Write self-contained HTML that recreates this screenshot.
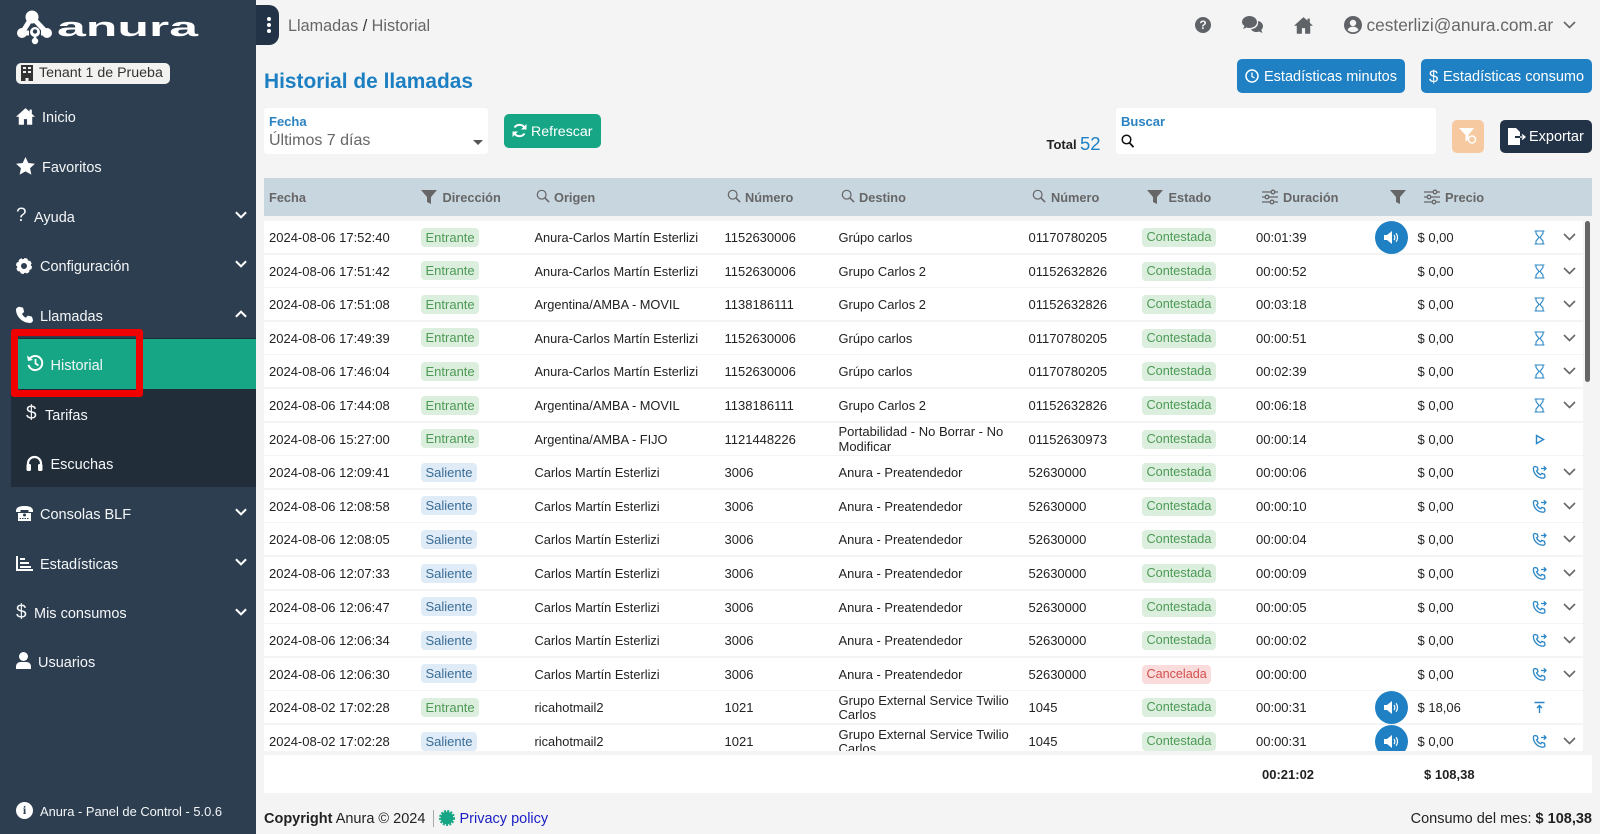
<!DOCTYPE html>
<html lang="es"><head><meta charset="utf-8"><title>Historial de llamadas</title>
<style>
*{box-sizing:border-box}
html,body{margin:0;padding:0;width:1600px;height:834px;overflow:hidden;background:#f4f4f4;font-family:"Liberation Sans",Arial,sans-serif;color:#222}
.a{position:absolute;white-space:nowrap}
#side{position:absolute;left:0;top:0;width:256px;height:834px;background:#2d3e50;color:#fff}
.mi{position:absolute;margin-top:1px;font-size:14.5px;line-height:20px;height:20px;color:#f4f6f8;white-space:nowrap}
.si{position:absolute;fill:#fff}
.ch{position:absolute;left:235px;width:12px;height:8px;fill:none;stroke:#fff;stroke-width:2.2}
.btn{position:absolute;border-radius:5px;color:#fff;font-size:14.5px;white-space:nowrap}
.card{position:absolute;background:#fff;border-radius:3px}
.lab{position:absolute;left:5px;top:6px;font-size:13px;font-weight:bold;color:#2a82c0;line-height:15px}
#band{position:absolute;left:264px;top:178px;width:1328px;height:38px;background:#c8d6e0}
.h{position:absolute;top:0;line-height:40px;height:38px;font-size:12.8px;font-weight:bold;color:#666;white-space:nowrap}
.hi{position:absolute;fill:#666}
#clip{position:absolute;left:264px;top:220px;width:1319px;height:531px;overflow:hidden}
.r{position:absolute;left:0;width:1319px;height:32px;background:#fff;font-size:13px;line-height:33px;color:#222}
.r>span,.r>div{position:absolute;white-space:nowrap}
.f{left:5px}.o{left:270.5px;font-size:12.8px}.n{left:460.5px}.d{left:574.5px;font-size:12.9px}.m{left:764.5px}.t{left:992px}.p{left:1153.5px}
.d2{left:574.5px;top:2.5px;line-height:14.5px}
.pill{top:6.5px;height:19px;line-height:19px;padding:0 4.5px;border-radius:4px}
.en{left:157px;background:#dceede;color:#4d9a55}
.sa{left:157px;background:#dfecf7;color:#3a6c96}
.r>.co{left:878px;top:7px;background:#dceede;color:#4d9a55;font-size:12.7px}
.r>.ca{left:878px;top:7px;background:#fadcdc;color:#d2504c;font-size:12.6px}
svg.ac{position:absolute;left:1268px;top:9px;width:15px;height:15px;fill:none;stroke:#2a86c6;stroke-width:1.6}
svg.hgi{stroke-width:1.1}
svg.cv{position:absolute;left:1299px;top:12px;width:13px;height:8px;fill:none;stroke:#666;stroke-width:1.6}
.au{position:absolute;left:1110.5px;top:-0.5px;width:33px;height:33px;border-radius:50%;background:#1f80c4}
.au svg{position:absolute;left:8px;top:8px;width:17px;height:17px;fill:#fff}
#sb{position:absolute;left:1585px;top:221px;width:5px;height:161px;border-radius:3px;background:#666}
#tot{position:absolute;left:264px;top:755px;width:1328px;height:38px;background:#fff;font-size:13px;font-weight:bold;line-height:39px;color:#222}
</style></head><body>
<svg width="0" height="0" style="position:absolute">
<defs>
<symbol id="funnel" viewBox="0 0 16 16"><path d="M0 1h16L10 8v7l-4-2V8z"/></symbol>
<symbol id="mag" viewBox="0 0 16 16"><circle cx="6.5" cy="6.5" r="5" fill="none" stroke="#666" stroke-width="1.4"/><path d="M10.2 10.2L15 15" stroke="#666" stroke-width="1.8" fill="none"/></symbol>
<symbol id="slid" viewBox="0 0 16 16"><g fill="none" stroke="#666" stroke-width="1.3"><path d="M0 3h9M13 3h3M0 8h3M7 8h9M0 13h8M12 13h4"/><circle cx="11" cy="3" r="1.8"/><circle cx="5" cy="8" r="1.8"/><circle cx="10" cy="13" r="1.8"/></g></symbol>
<symbol id="cvd" viewBox="0 0 13 8"><path d="M1 1l5.5 5.5L12 1"/></symbol>
<symbol id="hg" viewBox="0 0 15 15"><path d="M2.5 1h10M2.5 14h10M4 1v2.500L7 7.500 4 11v3M11 1v2.500L8 7.500l3 3.500v3"/></symbol>
<symbol id="ph" viewBox="0 0 15 15"><path d="M3 1.500l2.200.6.8 2.600-1.400 1.100c.8 1.800 2.200 3.200 4 4l1.100-1.400 2.700.9.6 2.300c0 1-1 1.600-1.800 1.600C5.400 13.200 1.400 8.600 1.400 3.300 1.400 2.400 2 1.500 3 1.500z" stroke-width="1.300"/><path d="M9 3.500h5M11.800 1.300l2.200 2.200-2.200 2.200" stroke-width="1.300"/></symbol>
<symbol id="spk" viewBox="0 0 17 17"><path d="M1 6h3l5-4v13l-5-4H1z"/><path d="M11 6c1 1.500 1 3.500 0 5M13 4.200c2 2.500 2 6.100 0 8.600" fill="none" stroke="#fff" stroke-width="1.200"/></symbol>
</defs>
</svg>

<div id="side">
<svg class="a" style="left:16px;top:8px" width="190" height="40" viewBox="0 0 190 40">
<path d="M16 9L6 25M16 9L31 25" stroke="#fff" stroke-width="5" fill="none"/>
<path d="M6 25H13M25 25H31" stroke="#fff" stroke-width="5" fill="none"/>
<g fill="#fff"><circle cx="16" cy="9" r="6.500"/><circle cx="6" cy="25" r="5"/><circle cx="31" cy="25" r="5"/><circle cx="19" cy="24" r="5"/><circle cx="19" cy="33" r="3.200"/></g>
<circle cx="19" cy="23.500" r="2.200" fill="#2d3e50"/><path d="M19 26v6" stroke="#fff" stroke-width="2.500"/>
<text x="41" y="28" font-family="Liberation Sans" font-weight="bold" font-size="27" fill="#fff" textLength="141" lengthAdjust="spacingAndGlyphs">anura</text>
</svg>

<div class="a" style="left:16px;top:63px;width:154px;height:21px;background:#f2f2f0;border-radius:5px;color:#333;font-size:14.2px;line-height:21px;padding-left:23px">Tenant 1 de Prueba</div>
<svg class="a" style="left:21px;top:65px" width="12" height="16" viewBox="0 0 12 16"><path fill="#333" d="M0 0h12v16H7.500v-3h-3v3H0z"/><path fill="#f2f2f0" d="M2 2h3v2H2zM7 2h3v2H7zM2 6h3v2H2zM7 6h3v2H7z"/></svg>

<svg class="si" style="left:16px;top:107px" width="19" height="18" viewBox="0 0 24 22"><path d="M12 1L0 12h3.500v10H10v-7h4v7h6.500V12H24l-4-3.700V3h-3v2.500z"/></svg>
<div class="mi" style="left:42px;top:107px">Inicio</div>
<svg class="si" style="left:16px;top:157px" width="19" height="18" viewBox="0 0 24 23"><path d="M12 0l3.600 7.600 8.400 1-6.200 5.700 1.700 8.200L12 18.400l-7.500 4.100 1.700-8.200L0 8.600l8.400-1z"/></svg>
<div class="mi" style="left:42px;top:157px">Favoritos</div>
<div class="mi" style="left:16px;top:203px;font-size:19px;line-height:24px">?</div>
<div class="mi" style="left:34px;top:207px">Ayuda</div>
<svg class="ch" style="top:211px"><use href="#cvd"/></svg>
<svg class="a" style="left:16px;top:258px" width="16" height="16" viewBox="0 0 16 16"><circle cx="8" cy="8" r="5" fill="none" stroke="#fff" stroke-width="4"/><circle cx="8" cy="8" r="6.800" fill="none" stroke="#fff" stroke-width="2.400" stroke-dasharray="3.300 2.040"/></svg>
<div class="mi" style="left:40px;top:256px">Configuración</div>
<svg class="ch" style="top:260px"><use href="#cvd"/></svg>
<svg class="si" style="left:16px;top:306px" width="17" height="17" viewBox="0 0 24 24"><path d="M5 1l5 1.500 1.500 6-3 2.500c1 2.500 3 4.500 5.500 5.500l2.500-3 6 1.500L24 20c0 2-2 4-4 4C9 24 0 15 0 5c0-2 3-4 5-4z"/></svg>
<div class="mi" style="left:40px;top:306px">Llamadas</div>
<svg class="ch" style="top:310px;transform:scaleY(-1)"><use href="#cvd"/></svg>

<div class="a" style="left:11px;top:338px;width:245px;height:149px;background:#222d3a"></div>
<div class="a" style="left:18px;top:339px;width:238px;height:50px;background:#17a685"></div>
<div class="a" style="left:11px;top:329px;width:132px;height:68px;border:7px solid #f10000;border-radius:3px"></div>
<svg class="a" style="left:26px;top:354px" width="18" height="18" viewBox="0 0 18 18"><path d="M3.500 5A7 7 0 1 1 2.500 11" fill="none" stroke="#fff" stroke-width="2"/><path d="M1 1.500L2 7l5-1z" fill="#fff"/><path d="M9.500 5v4.500l3 2" fill="none" stroke="#fff" stroke-width="1.700"/></svg>
<div class="mi" style="left:50.500px;top:355px">Historial</div>
<div class="mi" style="left:26px;top:401px;font-size:19px;line-height:24px">$</div>
<div class="mi" style="left:45px;top:405px">Tarifas</div>
<svg class="a" style="left:26px;top:455px" width="17" height="16" viewBox="0 0 17 16"><path d="M2 12V8.500a6.500 6.500 0 0 1 13 0V12" fill="none" stroke="#fff" stroke-width="2.200"/><rect x="0.500" y="9" width="4.500" height="7" rx="1.500" fill="#fff"/><rect x="12" y="9" width="4.500" height="7" rx="1.500" fill="#fff"/></svg>
<div class="mi" style="left:50.500px;top:454px">Escuchas</div>

<svg class="a" style="left:16px;top:506px" width="17" height="15" viewBox="0 0 17 15"><path fill="#fff" d="M0 5C0 1 4 0 8.500 0S17 1 17 5v1h-4.500V4h-8v2H0z"/><path fill="#fff" d="M2 7h13v8H2z"/><circle cx="8.500" cy="9" r="1.500" fill="#2d3e50"/><path stroke="#2d3e50" d="M3.500 12.500h10" stroke-dasharray="1.500 1"/></svg>
<div class="mi" style="left:40px;top:504px">Consolas BLF</div>
<svg class="ch" style="top:508px"><use href="#cvd"/></svg>
<svg class="a" style="left:16px;top:556px" width="17" height="15" viewBox="0 0 17 15"><path fill="#fff" d="M0 0h2v13h15v2H0z"/><path fill="#fff" d="M4 2h5v2H4zM4 6h9v2H4zM4 10h11v2H4z"/></svg>
<div class="mi" style="left:40px;top:554px">Estadísticas</div>
<svg class="ch" style="top:558px"><use href="#cvd"/></svg>
<div class="mi" style="left:16px;top:600px;font-size:19px;line-height:24px">$</div>
<div class="mi" style="left:34px;top:603px">Mis consumos</div>
<svg class="ch" style="top:608px"><use href="#cvd"/></svg>
<svg class="si" style="left:16px;top:652px" width="15" height="17" viewBox="0 0 15 17"><circle cx="7.500" cy="4.500" r="4.500"/><path d="M0 17v-2.500C0 12 2 10 4.500 10h6c2.500 0 4.500 2 4.500 4.500V17z"/></svg>
<div class="mi" style="left:38px;top:652px">Usuarios</div>
<div class="a" style="left:16px;top:802px;width:17px;height:17px;border-radius:50%;background:#fff;color:#2d3e50;font:bold 12px/17px 'Liberation Serif',serif;text-align:center">i</div>
<div class="mi" style="left:40px;top:801px;font-size:12.900px">Anura - Panel de Control - 5.0.6</div>
</div>

<div class="a" style="left:256px;top:5px;width:23px;height:40px;background:#233347;border-radius:0 10px 10px 0"></div>
<div class="a" style="left:267px;top:17px;width:4px;height:4px;background:#fff;border-radius:50%"></div>
<div class="a" style="left:267px;top:23px;width:4px;height:4px;background:#fff;border-radius:50%"></div>
<div class="a" style="left:267px;top:29px;width:4px;height:4px;background:#fff;border-radius:50%"></div>
<div class="a" style="left:288px;top:16.500px;font-size:16.200px;line-height:18px;color:#666">Llamadas <span style="color:#333">/</span> Historial</div>

<div class="a" style="left:1195px;top:17px;width:16px;height:16px;border-radius:50%;background:#5f6368;color:#f4f4f4;font:bold 12px/16px 'Liberation Sans',sans-serif;text-align:center">?</div>
<svg class="a" style="left:1242px;top:16px" width="21" height="18" viewBox="0 0 21 18"><path fill="#5f6368" d="M7.500 0C11.500 0 15 2.500 15 6s-3.500 6-7.500 6c-1 0-2-.2-3-.5L1 13l1.500-3C1 9 0 7.500 0 6 0 2.500 3.500 0 7.500 0z"/><path fill="#5f6368" d="M16 5c3 .5 5 2.700 5 5.300 0 1.500-.7 2.700-1.800 3.700l1.300 3-3.500-1.500c-.8.300-1.700.5-2.500.5-2.300 0-4.500-1-5.500-2.800C13 13 17 10 16 5z"/></svg>
<svg class="a" style="left:1294px;top:16px" width="19" height="18" viewBox="0 0 24 22"><path fill="#5f6368" d="M12 1L0 12h3.500v10H10v-7h4v7h6.500V12H24l-4-3.700V3h-3v2.500z"/></svg>
<svg class="a" style="left:1344px;top:16px" width="18" height="18" viewBox="0 0 18 18"><circle cx="9" cy="9" r="9" fill="#5f6368"/><circle cx="9" cy="7" r="3.200" fill="#f4f4f4"/><path d="M3.500 14c1-2.500 3-3.300 5.500-3.300s4.500.8 5.500 3.300C13 15.500 11 16.200 9 16.200S5 15.500 3.500 14z" fill="#f4f4f4"/></svg>
<div class="a" style="left:1366.500px;top:15px;font-size:17.300px;line-height:20px;color:#666">cesterlizi@anura.com.ar</div>
<svg class="a" style="left:1563px;top:21px;fill:none;stroke:#666;stroke-width:1.600" width="13" height="8"><use href="#cvd"/></svg>

<div class="a" style="left:264px;top:70px;font-size:20.900px;font-weight:bold;line-height:24px;color:#1c7fc2">Historial de llamadas</div>

<div class="btn" style="left:1237px;top:59px;width:168px;height:34px;background:#1f80c4;line-height:36px;padding-left:27px">Estadísticas minutos</div>
<svg class="a" style="left:1245px;top:69px" width="14" height="14" viewBox="0 0 14 14"><circle cx="7" cy="7" r="6" fill="none" stroke="#fff" stroke-width="1.500"/><path d="M7 3.500V7.500l2.500 1.500" fill="none" stroke="#fff" stroke-width="1.300"/></svg>
<div class="btn" style="left:1421px;top:59px;width:171px;height:34px;background:#1f80c4;line-height:36px;padding-left:22px">Estadísticas consumo</div>
<div class="a" style="left:1429px;top:65px;font-size:16.500px;line-height:24px;color:#fff">$</div>

<div class="card" style="left:264px;top:108px;width:224px;height:46px">
<div class="lab">Fecha</div>
<div class="a" style="left:5px;top:24px;font-size:16px;line-height:18px;color:#666">Últimos 7 días</div>
<div class="a" style="left:209px;top:32px;border-left:5px solid transparent;border-right:5px solid transparent;border-top:5px solid #555"></div>
</div>
<div class="btn" style="left:504px;top:114px;width:97px;height:34px;background:#17a685;font-size:14.200px;line-height:36px;padding-left:27px">Refrescar</div>
<svg class="a" style="left:512px;top:123px" width="15" height="15" viewBox="0 0 15 15"><path d="M13 5.500A6 6 0 0 0 2.500 4.500M2 9.500a6 6 0 0 0 10.500 1" fill="none" stroke="#fff" stroke-width="2"/><path d="M14.500 1v5.500H9zM.5 14V8.500H6z" fill="#fff"/></svg>

<div class="a" style="left:1046.500px;top:137px;font-size:13px;font-weight:bold;line-height:16px;color:#222">Total</div>
<div class="a" style="left:1080px;top:133px;font-size:18.500px;line-height:22px;color:#1f80c4">52</div>
<div class="card" style="left:1116px;top:108px;width:320px;height:46px">
<div class="lab">Buscar</div>
<svg class="a" style="left:5px;top:26px" width="13" height="14" viewBox="0 0 13 14"><circle cx="5.500" cy="5.500" r="4.300" fill="none" stroke="#111" stroke-width="1.500"/><path d="M8.700 9l3.800 4.200" stroke="#111" stroke-width="1.800"/></svg>
</div>
<div class="btn" style="left:1452px;top:120px;width:32px;height:33px;background:#f6c9a0"></div>
<svg class="a" style="left:1459px;top:128px" width="18" height="17" viewBox="0 0 18 17"><path d="M0 0h15L9.500 7v4.500l-3 2V7z" fill="#fff"/><circle cx="13" cy="11.500" r="3.500" fill="none" stroke="#fff" stroke-width="1.500"/></svg>
<div class="btn" style="left:1500px;top:120px;width:92px;height:33px;background:#233347;line-height:35px;padding-left:29px">Exportar</div>
<svg class="a" style="left:1508px;top:128px" width="18" height="17" viewBox="0 0 18 17"><path d="M0 0h8l4 4v4H7v2h5v7H0z" fill="#fff"/><path d="M12 9h4M14 6.500L17 9l-3 2.500" stroke="#fff" stroke-width="1.300" fill="none"/></svg>

<div id="band">
<div class="h" style="left:5px">Fecha</div>
<svg class="hi" style="left:157px;top:11px" width="16" height="16"><use href="#funnel"/></svg>
<div class="h" style="left:178.500px">Dirección</div>
<svg class="hi" style="left:272px;top:11px" width="14" height="14"><use href="#mag"/></svg>
<div class="h" style="left:290px">Origen</div>
<svg class="hi" style="left:463px;top:11px" width="14" height="14"><use href="#mag"/></svg>
<div class="h" style="left:481px">Número</div>
<svg class="hi" style="left:577px;top:11px" width="14" height="14"><use href="#mag"/></svg>
<div class="h" style="left:595px">Destino</div>
<svg class="hi" style="left:768px;top:11px" width="14" height="14"><use href="#mag"/></svg>
<div class="h" style="left:787px">Número</div>
<svg class="hi" style="left:883px;top:11px" width="16" height="16"><use href="#funnel"/></svg>
<div class="h" style="left:904.500px">Estado</div>
<svg class="hi" style="left:998px;top:11px" width="16" height="16"><use href="#slid"/></svg>
<div class="h" style="left:1019px">Duración</div>
<svg class="hi" style="left:1126px;top:11px" width="16" height="16"><use href="#funnel"/></svg>
<svg class="hi" style="left:1160px;top:11px" width="16" height="16"><use href="#slid"/></svg>
<div class="h" style="left:1181px">Precio</div>
</div>

<div id="clip">
<div class="r" style="top:1px"><span class="f">2024-08-06 17:52:40</span><span class="pill en">Entrante</span><span class="o">Anura-Carlos Martín Esterlizi</span><span class="n">1152630006</span><span class="d">Grúpo carlos</span><span class="m">01170780205</span><span class="pill co">Contestada</span><span class="t">00:01:39</span><div class="au"><svg><use href="#spk"/></svg></div><span class="p">$ 0,00</span><svg class="ac hgi"><use href="#hg"/></svg><svg class="cv"><use href="#cvd"/></svg></div>
<div class="r" style="top:34.600px"><span class="f">2024-08-06 17:51:42</span><span class="pill en">Entrante</span><span class="o">Anura-Carlos Martín Esterlizi</span><span class="n">1152630006</span><span class="d">Grupo Carlos 2</span><span class="m">01152632826</span><span class="pill co">Contestada</span><span class="t">00:00:52</span><span class="p">$ 0,00</span><svg class="ac hgi"><use href="#hg"/></svg><svg class="cv"><use href="#cvd"/></svg></div>
<div class="r" style="top:68.200px"><span class="f">2024-08-06 17:51:08</span><span class="pill en">Entrante</span><span class="o">Argentina/AMBA - MOVIL</span><span class="n">1138186111</span><span class="d">Grupo Carlos 2</span><span class="m">01152632826</span><span class="pill co">Contestada</span><span class="t">00:03:18</span><span class="p">$ 0,00</span><svg class="ac hgi"><use href="#hg"/></svg><svg class="cv"><use href="#cvd"/></svg></div>
<div class="r" style="top:101.800px"><span class="f">2024-08-06 17:49:39</span><span class="pill en">Entrante</span><span class="o">Anura-Carlos Martín Esterlizi</span><span class="n">1152630006</span><span class="d">Grúpo carlos</span><span class="m">01170780205</span><span class="pill co">Contestada</span><span class="t">00:00:51</span><span class="p">$ 0,00</span><svg class="ac hgi"><use href="#hg"/></svg><svg class="cv"><use href="#cvd"/></svg></div>
<div class="r" style="top:135.400px"><span class="f">2024-08-06 17:46:04</span><span class="pill en">Entrante</span><span class="o">Anura-Carlos Martín Esterlizi</span><span class="n">1152630006</span><span class="d">Grúpo carlos</span><span class="m">01170780205</span><span class="pill co">Contestada</span><span class="t">00:02:39</span><span class="p">$ 0,00</span><svg class="ac hgi"><use href="#hg"/></svg><svg class="cv"><use href="#cvd"/></svg></div>
<div class="r" style="top:169px"><span class="f">2024-08-06 17:44:08</span><span class="pill en">Entrante</span><span class="o">Argentina/AMBA - MOVIL</span><span class="n">1138186111</span><span class="d">Grupo Carlos 2</span><span class="m">01152632826</span><span class="pill co">Contestada</span><span class="t">00:06:18</span><span class="p">$ 0,00</span><svg class="ac hgi"><use href="#hg"/></svg><svg class="cv"><use href="#cvd"/></svg></div>
<div class="r" style="top:202.600px"><span class="f">2024-08-06 15:27:00</span><span class="pill en">Entrante</span><span class="o">Argentina/AMBA - FIJO</span><span class="n">1121448226</span><div class="d2">Portabilidad - No Borrar - No<br>Modificar</div><span class="m">01152630973</span><span class="pill co">Contestada</span><span class="t">00:00:14</span><span class="p">$ 0,00</span><svg class="ac" viewBox="0 0 15 15"><path d="M4.500 3.500v8l7-4z" stroke-width="1.400"/></svg></div>
<div class="r" style="top:236.200px"><span class="f">2024-08-06 12:09:41</span><span class="pill sa">Saliente</span><span class="o">Carlos Martín Esterlizi</span><span class="n">3006</span><span class="d">Anura - Preatendedor</span><span class="m">52630000</span><span class="pill co">Contestada</span><span class="t">00:00:06</span><span class="p">$ 0,00</span><svg class="ac"><use href="#ph"/></svg><svg class="cv"><use href="#cvd"/></svg></div>
<div class="r" style="top:269.800px"><span class="f">2024-08-06 12:08:58</span><span class="pill sa">Saliente</span><span class="o">Carlos Martín Esterlizi</span><span class="n">3006</span><span class="d">Anura - Preatendedor</span><span class="m">52630000</span><span class="pill co">Contestada</span><span class="t">00:00:10</span><span class="p">$ 0,00</span><svg class="ac"><use href="#ph"/></svg><svg class="cv"><use href="#cvd"/></svg></div>
<div class="r" style="top:303.400px"><span class="f">2024-08-06 12:08:05</span><span class="pill sa">Saliente</span><span class="o">Carlos Martín Esterlizi</span><span class="n">3006</span><span class="d">Anura - Preatendedor</span><span class="m">52630000</span><span class="pill co">Contestada</span><span class="t">00:00:04</span><span class="p">$ 0,00</span><svg class="ac"><use href="#ph"/></svg><svg class="cv"><use href="#cvd"/></svg></div>
<div class="r" style="top:337px"><span class="f">2024-08-06 12:07:33</span><span class="pill sa">Saliente</span><span class="o">Carlos Martín Esterlizi</span><span class="n">3006</span><span class="d">Anura - Preatendedor</span><span class="m">52630000</span><span class="pill co">Contestada</span><span class="t">00:00:09</span><span class="p">$ 0,00</span><svg class="ac"><use href="#ph"/></svg><svg class="cv"><use href="#cvd"/></svg></div>
<div class="r" style="top:370.600px"><span class="f">2024-08-06 12:06:47</span><span class="pill sa">Saliente</span><span class="o">Carlos Martín Esterlizi</span><span class="n">3006</span><span class="d">Anura - Preatendedor</span><span class="m">52630000</span><span class="pill co">Contestada</span><span class="t">00:00:05</span><span class="p">$ 0,00</span><svg class="ac"><use href="#ph"/></svg><svg class="cv"><use href="#cvd"/></svg></div>
<div class="r" style="top:404.200px"><span class="f">2024-08-06 12:06:34</span><span class="pill sa">Saliente</span><span class="o">Carlos Martín Esterlizi</span><span class="n">3006</span><span class="d">Anura - Preatendedor</span><span class="m">52630000</span><span class="pill co">Contestada</span><span class="t">00:00:02</span><span class="p">$ 0,00</span><svg class="ac"><use href="#ph"/></svg><svg class="cv"><use href="#cvd"/></svg></div>
<div class="r" style="top:437.800px"><span class="f">2024-08-06 12:06:30</span><span class="pill sa">Saliente</span><span class="o">Carlos Martín Esterlizi</span><span class="n">3006</span><span class="d">Anura - Preatendedor</span><span class="m">52630000</span><span class="pill ca">Cancelada</span><span class="t">00:00:00</span><span class="p">$ 0,00</span><svg class="ac"><use href="#ph"/></svg><svg class="cv"><use href="#cvd"/></svg></div>
<div class="r" style="top:471.400px"><span class="f">2024-08-02 17:02:28</span><span class="pill en">Entrante</span><span class="o">ricahotmail2</span><span class="n">1021</span><div class="d2">Grupo External Service Twilio<br>Carlos</div><span class="m">1045</span><span class="pill co">Contestada</span><span class="t">00:00:31</span><div class="au"><svg><use href="#spk"/></svg></div><span class="p">$ 18,06</span><svg class="ac" viewBox="0 0 15 15"><path d="M2.500 2.500h10M7.500 13V5.500M5 8l2.500-2.500L10 8" stroke-width="1.400"/></svg></div>
<div class="r" style="top:505px"><span class="f">2024-08-02 17:02:28</span><span class="pill sa">Saliente</span><span class="o">ricahotmail2</span><span class="n">1021</span><div class="d2">Grupo External Service Twilio<br>Carlos</div><span class="m">1045</span><span class="pill co">Contestada</span><span class="t">00:00:31</span><div class="au"><svg><use href="#spk"/></svg></div><span class="p">$ 0,00</span><svg class="ac"><use href="#ph"/></svg><svg class="cv"><use href="#cvd"/></svg></div>
</div>
<div id="sb"></div>

<div id="tot"><span class="a" style="left:998px">00:21:02</span><span class="a" style="left:1160px">$ 108,38</span></div>

<div class="a" style="left:264px;top:810px;font-size:14.500px;line-height:18px;color:#222"><b>Copyright</b> Anura © 2024</div>
<div class="a" style="left:433px;top:810px;width:1px;height:17px;background:#aaa"></div>
<svg class="a" style="left:439px;top:810px" width="16" height="16" viewBox="0 0 16 16"><circle cx="8" cy="8" r="6.300" fill="#17a685"/><circle cx="8" cy="8" r="7" fill="none" stroke="#17a685" stroke-width="2" stroke-dasharray="2 1.300"/></svg>
<div class="a" style="left:459.500px;top:810px;font-size:14.500px;line-height:18px;color:#1a1fc4">Privacy policy</div>
<div class="a" style="right:8px;top:810px;font-size:14.500px;line-height:18px;color:#222">Consumo del mes: <b>$ 108,38</b></div>
</body></html>
